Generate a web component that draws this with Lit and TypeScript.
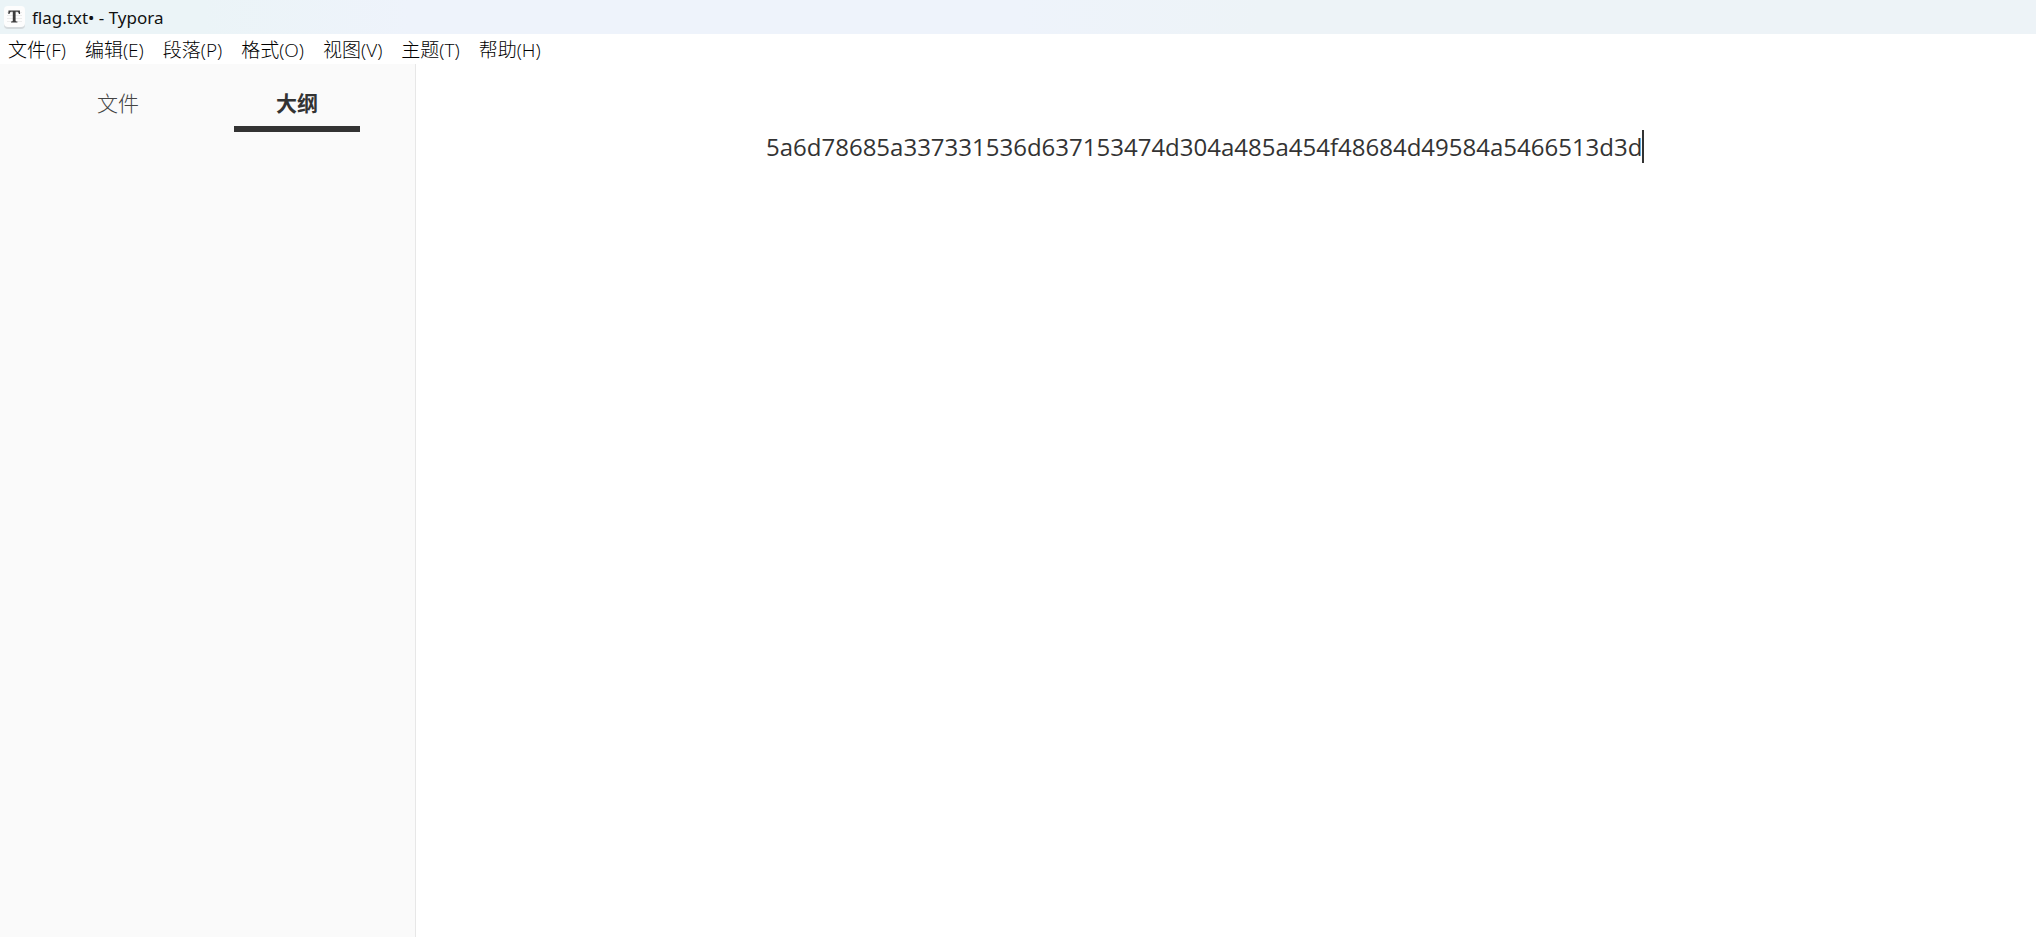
import { LitElement, html, css } from "lit";
import { customElement, state } from "lit/decorators.js";
import { classMap } from "lit/directives/class-map.js";

const MENUS = ["文件(F)", "编辑(E)", "段落(P)", "格式(O)", "视图(V)", "主题(T)", "帮助(H)"];
const TABS = ["文件", "大纲"];

@customElement("app-root")
export class AppRoot extends LitElement {
  static styles = css`
    :host {
      display: flex;
      flex-direction: column;
      min-height: 100vh;
      background: #fff;
      color: #333;
      font-family: "Open Sans", "Noto Sans CJK SC", sans-serif;
    }
    button {
      margin: 0;
      padding: 0;
      border: 0;
      background: none;
      color: inherit;
      font: inherit;
      white-space: nowrap;
    }
    .title-bar {
      display: flex;
      align-items: center;
      gap: 7px;
      height: 34px;
      padding: 0 4px;
      background: linear-gradient(90deg, #ebf4f7 0%, #ebf4f7 10%, #eef3fb 20%, #eef3fb 50%, #edf3f7 62%, #edf3f7 100%);
      color: #111;
      font: 17px/24px "Noto Sans", "Noto Sans CJK SC", sans-serif;
    }
    .title {
      margin: 0;
      padding-top: 2px;
      font: inherit;
    }
    .logo {
      display: block;
      width: 21px;
      height: 24px;
    }
    .menu-bar {
      display: flex;
      gap: 19px;
      padding: 2px 8px 0;
      color: #000;
      font-size: 19px;
      line-height: 28px;
      font-weight: 300;
    }
    .body {
      display: flex;
      flex: 1;
    }
    .sidebar {
      box-sizing: border-box;
      flex: none;
      width: 416px;
      padding: 20px 55px;
      border-right: 1px solid #e7e7e7;
      background: #fafafa;
    }
    .tabs {
      display: flex;
      justify-content: space-between;
    }
    .tab {
      width: 126px;
      height: 48px;
      padding-bottom: 4px;
      border-bottom: 6px solid transparent;
      color: #444;
      font-size: 21px;
      line-height: 38px;
      font-weight: 300;
    }
    .tab.active {
      border-color: #333;
      color: #333;
      font-weight: 700;
    }
    .editor {
      flex: 1;
      min-width: 0;
      padding: 66px 40px;
    }
    .page {
      max-width: 920px;
      margin: 0 auto;
      outline: none;
      font-size: 24px;
      line-height: 33px;
    }
    .line {
      display: flex;
      margin: 0;
    }
    .text {
      min-width: 0;
      overflow-wrap: anywhere;
    }
    .caret {
      flex: none;
      width: 2px;
      background: #333;
    }
  `;

  @state() private active = 1;

  render() {
    return html`
      <header class="title-bar">
        <svg class="logo" viewBox="0 0 21 24" aria-hidden="true">
          <rect x="0" y="3" width="21" height="21" rx="4" fill="#d5dadd" />
          <rect x="0" y="1" width="21" height="21" rx="4" fill="#fdfdfd" />
          <path d="M3 7.5h15M3 10.5h15M3 13.5h15M3 16.5h15" stroke="#ececec" />
          <path
            d="M4.5 5.5h11.4l.2 3.6h-1.2c-.3-1.8-.8-2.4-2.2-2.4h-1.1v8.7c0 .8.4 1 1.8 1.1v1H7v-1c1.4-.1 1.8-.3 1.8-1.1V6.7H7.7c-1.4 0-1.9.6-2.2 2.4H4.3z"
            fill="#3c3c3c"
          />
        </svg>
        <h1 class="title">flag.txt• - Typora</h1>
      </header>
      <nav class="menu-bar" aria-label="菜单">
        ${MENUS.map((label) => html`<button type="button">${label}</button>`)}
      </nav>
      <div class="body">
        <aside class="sidebar">
          <div class="tabs" role="tablist">
            ${TABS.map(
              (label, i) => html`<button
                type="button"
                role="tab"
                aria-selected=${i === this.active}
                class=${classMap({ tab: true, active: i === this.active })}
                @click=${() => (this.active = i)}
              >${label}</button>`
            )}
          </div>
        </aside>
        <main class="editor">
          <div class="page" role="textbox" aria-multiline="true" aria-label="flag.txt" contenteditable="true" spellcheck="false">
            <p class="line"><span class="text">5a6d78685a337331536d637153474d304a485a454f48684d49584a5466513d3d</span><span class="caret"></span></p>
          </div>
        </main>
      </div>
    `;
  }
}
